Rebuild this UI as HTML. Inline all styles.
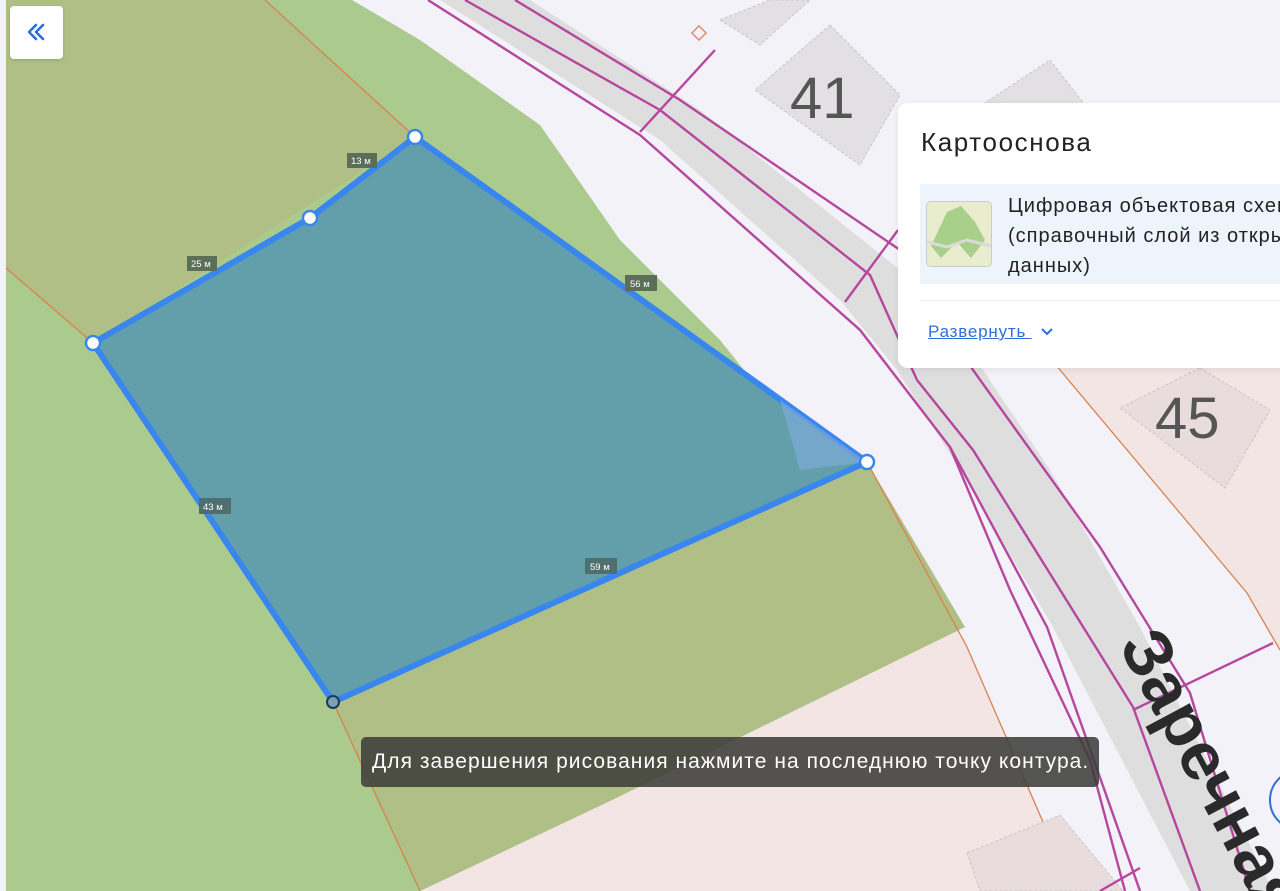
<!DOCTYPE html>
<html><head><meta charset="utf-8">
<style>
html,body{margin:0;padding:0;width:1280px;height:891px;overflow:hidden;background:#f7f7fa;font-family:"Liberation Sans",sans-serif}
#map{position:absolute;left:0;top:0}
.back{position:absolute;left:10px;top:6px;width:53px;height:53px;background:#fff;border-radius:4px;box-shadow:0 1px 3px rgba(0,0,0,.15)}
.panel{position:absolute;left:898px;top:103px;width:400px;height:265px;background:#fff;border-radius:10px 0 0 10px;box-shadow:0 2px 8px rgba(0,0,0,.08)}
.title{position:absolute;left:23px;top:24px;font-size:26px;letter-spacing:1.6px;color:#222}
.item{position:absolute;left:22px;top:81px;width:380px;height:100px;background:#eef4fb}
.thumb{position:absolute;left:6px;top:17px;width:64px;height:64px;border:1px solid #c8cdd4;border-radius:5px;background:#e9eccd;overflow:hidden}
.itext{position:absolute;left:88px;top:7px;font-size:20px;letter-spacing:1px;line-height:30px;color:#222;white-space:nowrap}
.div{position:absolute;left:22px;top:197px;width:380px;height:1px;background:#eceef1}
.link{position:absolute;left:30px;top:219px;font-size:17px;letter-spacing:0.8px;color:#2e6edc;text-decoration:underline}
.tip{position:absolute;left:361px;top:737px;width:738px;height:50px;background:rgba(62,62,58,.88);border-radius:5px;color:#fff;font-size:21px;letter-spacing:1.05px;line-height:50px;text-indent:11px;white-space:nowrap;overflow:hidden}
</style></head><body>
<svg id="map" width="1280" height="891" viewBox="0 0 1280 891">
<rect x="0" y="0" width="1280" height="891" fill="#f4f2f9"/>
<rect x="0" y="0" width="6" height="891" fill="#f3f4f6"/>
<polygon points="860,455 967,647 1073,891 420,891 420,700" fill="#f2e5e4"/>
<polygon points="1000,300 1060,370 1247,593 1280,650 1280,300" fill="#f2e5e4"/>
<polygon points="6,0 352,0 420,40 540,125 620,240 720,340 800,440 965,627 612,800 420,891 6,891" fill="#abca8d"/>
<polygon points="6,0 265,0 415,137 93,343 6,268" fill="#b0bf85"/>
<polygon points="333,702 867,462 965,627 612,800 420,891" fill="#b0bf85"/>
<g stroke="#d8824f" stroke-width="1.3" fill="none">
<polyline points="265,0 415,137"/><polyline points="6,268 93,343"/>
<polyline points="333,702 420,891"/>
<polyline points="867,462 967,647 1073,891"/>
<polyline points="1000,300 1060,370 1247,593 1280,650"/>
</g>
<polygon points="440,0 530,0 700,110 900,270 983,370 1050,470 1140,627 1273,891 1190,891 1053,627 960,470 897,370 840,300 660,140" fill="#dededf"/>
<g fill="#e2e0e2" stroke="#c8c6c8" stroke-dasharray="3 2">
<polygon points="720,20 770,0 810,0 760,45"/>
<polygon points="830,25 900,95 860,165 755,90"/>
<polygon points="1050,60 1085,105 985,103"/>
<polygon points="1200,368 1270,410 1225,488 1120,408" fill="#e8dcdc"/>
<polygon points="967,853 1060,815 1123,891 980,891" fill="#e8dcdc"/>
</g>
<text x="790" y="118" font-family="Liberation Sans,sans-serif" font-size="58" fill="#555">41</text>
<text x="1155" y="438" font-family="Liberation Sans,sans-serif" font-size="58" fill="#555">45</text>
<rect x="694" y="28" width="10" height="10" fill="none" stroke="#e08a70" stroke-width="1.5" transform="rotate(45 699 33)"/>
<g stroke="#b6479e" stroke-width="2.4" fill="none">
<polyline points="428,0 640,135 860,330 950,447 1047,627 1140,891"/>
<polyline points="950,447 1010,590 1090,760 1125,891"/>
<polyline points="465,0 660,110 870,275 917,380 973,450 1133,707 1200,891"/>
<polyline points="515,0 680,100 900,250 973,370 1100,547 1190,693 1250,891"/>
<polyline points="715,50 640,132"/><polyline points="898,230 845,302"/>
<polyline points="1273,643 1133,710"/><polyline points="1140,868 1100,891"/>
</g>
<text x="0" y="0" font-family="Liberation Sans,sans-serif" font-size="68" font-weight="bold" fill="#2a2a2a" transform="translate(1118,645) rotate(62)">Заречная</text>
<circle cx="1300" cy="800" r="30" fill="none" stroke="#2e6edc" stroke-width="2"/>
<polygon points="415,137 310,218 93,343 333,702 867,462" fill="#629fab" stroke="#3a86ef" stroke-width="6" stroke-linejoin="round"/>
<polygon points="780,400 867,462 800,470" fill="#80aee0" opacity=".6"/>
<g fill="#fff" stroke="#3a86ef" stroke-width="2.5">
<circle cx="415" cy="137" r="7"/><circle cx="310" cy="218" r="7"/><circle cx="93" cy="343" r="7"/><circle cx="867" cy="462" r="7"/>
</g>
<circle cx="333" cy="702" r="6" fill="#7aa2b0" stroke="#1d3a5a" stroke-width="2"/>
<g font-family="Liberation Sans,sans-serif" font-size="9.5" fill="#fff">
<rect x="347" y="153" width="30" height="15" fill="#5a6e58"/><text x="351" y="164">13 м</text>
<rect x="187" y="256" width="30" height="15" fill="#5a6e58"/><text x="191" y="267">25 м</text>
<rect x="625" y="275" width="32" height="16" fill="#5a6e58"/><text x="630" y="287">56 м</text>
<rect x="199" y="498" width="32" height="16" fill="#4f6e6e"/><text x="203" y="510">43 м</text>
<rect x="585" y="558" width="32" height="16" fill="#4f6e6e"/><text x="590" y="570">59 м</text>
</g>
</svg>
<div class="back"><svg width="53" height="53"><path d="M33 19l-7 7 7 7M26 19l-7 7 7 7" stroke="#2e6edc" stroke-width="2.6" fill="none" stroke-linecap="round" stroke-linejoin="round"/></svg></div>
<div class="panel">
<div class="title">Картооснова</div>
<div class="item">
<div class="thumb"><svg width="64" height="64"><polygon points="20,10 34,4 48,20 58,38 44,56 30,40 14,56 4,44" fill="#a8d08a"/><polyline points="0,40 20,45 40,38 64,44" stroke="#d8dcd8" stroke-width="3" fill="none"/></svg></div>
<div class="itext">Цифровая объектовая схема<br>(справочный слой из открытых<br>данных)</div>
</div>
<div class="div"></div>
<div class="link">Развернуть <svg width="14" height="10" style="margin-left:8px"><path d="M2 2l5 5 5-5" stroke="#2e6edc" stroke-width="2" fill="none"/></svg></div>
</div>
<div class="tip">Для завершения рисования нажмите на последнюю точку контура.</div>
</body></html>
